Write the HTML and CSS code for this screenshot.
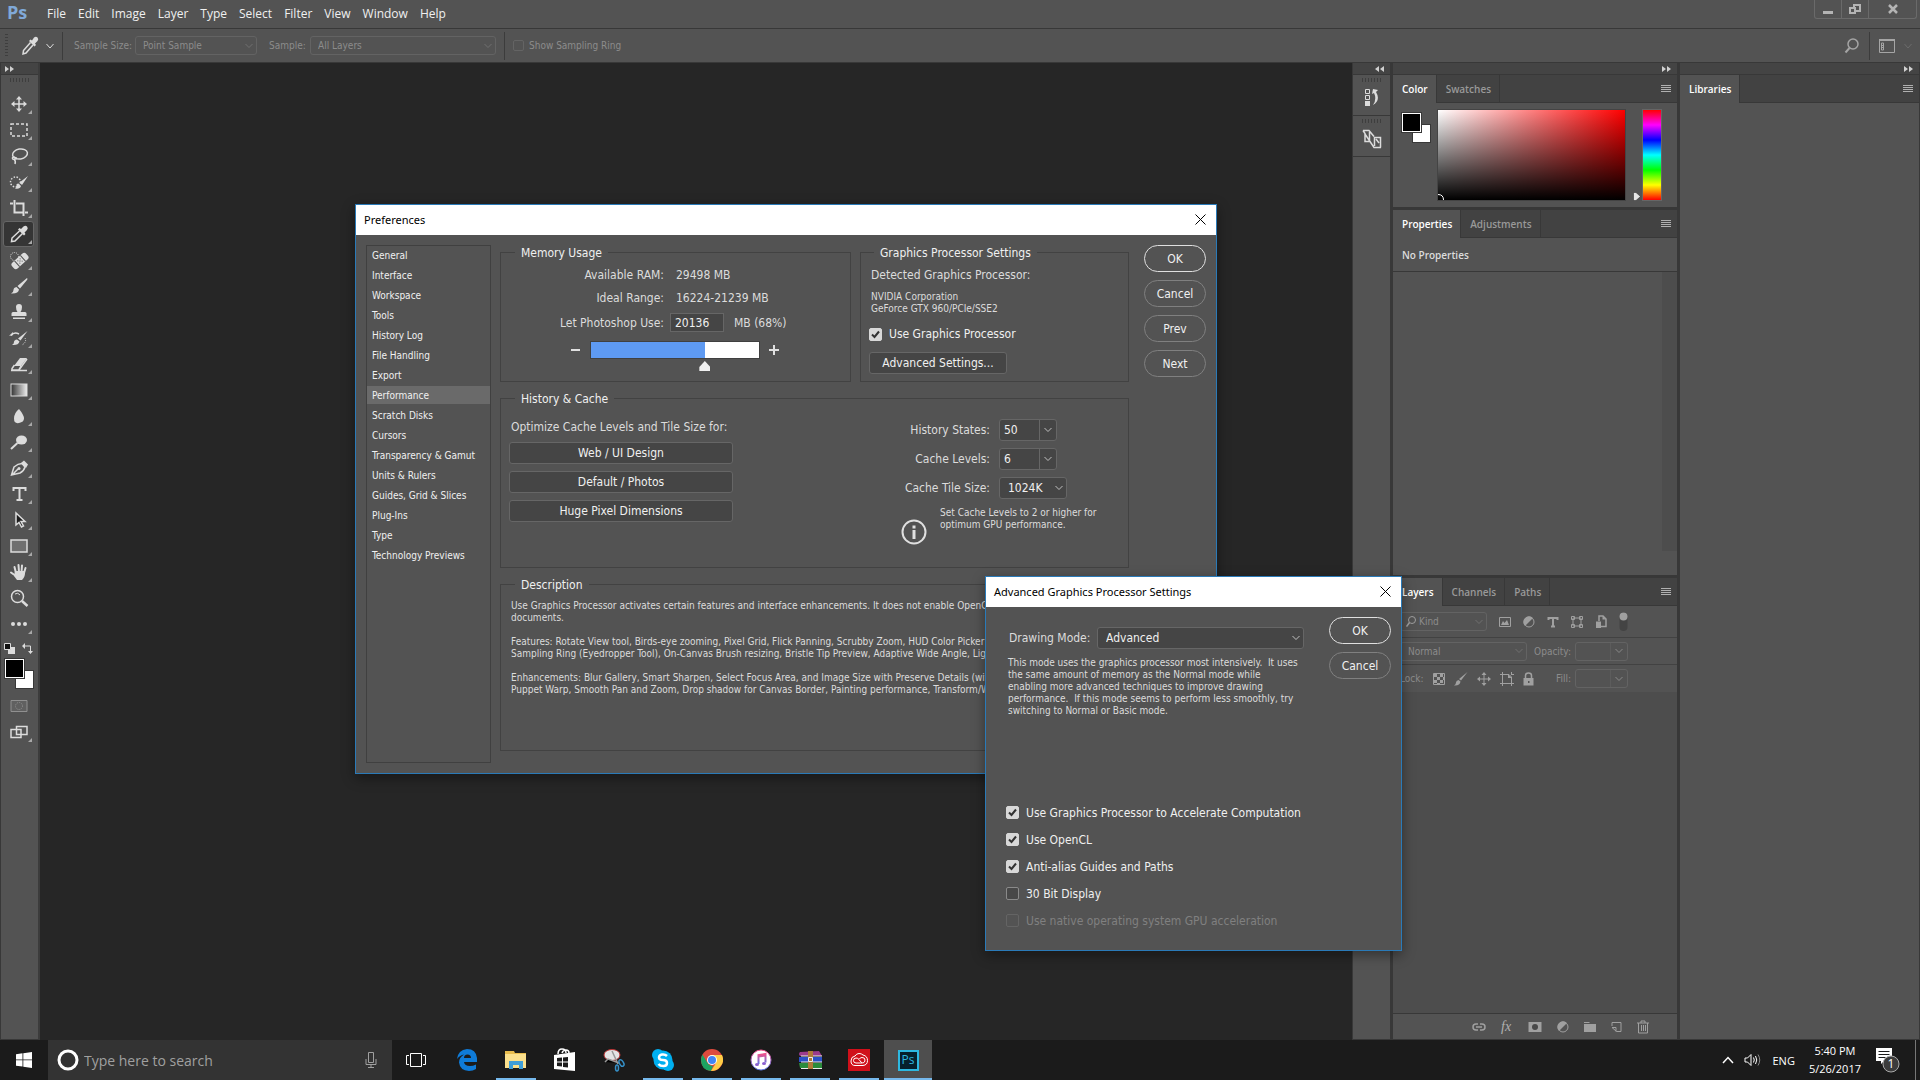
FILE: index.html
```html
<!DOCTYPE html>
<html lang="en">
<head>
    <meta charset="UTF-8">
    <meta name="viewport" content="width=device-width, initial-scale=1.0">
    <title>Photoshop - Preferences</title>
    <link rel="stylesheet" href="styles.css">
</head>
<body>
    <header class="menubar">
        <span class="logo">Ps</span>
        <nav class="menu">
            <a href="#">File</a>
            <a href="#">Edit</a>
            <a href="#">Image</a>
            <a href="#">Layer</a>
            <a href="#">Type</a>
            <a href="#">Select</a>
            <a href="#">Filter</a>
            <a href="#">View</a>
            <a href="#">Window</a>
            <a href="#">Help</a>
        </nav>
        <div class="window-buttons">
            <button aria-label="Minimize"><svg width="12" height="12" viewBox="0 0 12 12"><path fill="#b4b4b4" d="M1 8h10v3H1z"/></svg></button>
            <button aria-label="Restore"><svg width="12" height="12" viewBox="0 0 12 12"><path fill="none" stroke="#b4b4b4" stroke-width="2" d="M1 5h5v5H1zM5 4V2h6v6H7"/></svg></button>
            <button class="close" aria-label="Close"><svg width="12" height="12" viewBox="0 0 12 12"><path stroke="#b4b4b4" stroke-width="2.500" d="M2 2l8 8M10 2l-8 8"/></svg></button>
        </div>
    </header>

    <div class="options">
        <span class="grip-v"></span>
        <button class="tool-preset" aria-label="Eyedropper presets">
            <svg width="18" height="20" viewBox="0 0 18 20"><path fill="none" stroke="#dcdcdc" stroke-width="1.500" d="M9.500 6.500L2.500 14.500 2 18l3-1 7-8"/><path fill="#dcdcdc" d="M8 5l1.500-1.500 1.500 1L13 1.500q2-1.500 3.500 0t0 3.500L14 7.500l1 1.500-1.500 1.500z"/></svg>
            <svg width="8" height="6" viewBox="0 0 8 6"><path fill="none" stroke="#dcdcdc" d="M.5 1L4 5l3.500-4"/></svg>
        </button>
        <span class="divider"></span>
        <label class="dim" for="sampleSize">Sample Size:</label>
        <select class="flat sample-size" id="sampleSize" disabled><option>Point Sample</option></select>
        <label class="dim sample-label" for="sample">Sample:</label>
        <select class="flat sample" id="sample" disabled><option>All Layers</option></select>
        <span class="divider"></span>
        <label class="dim ring"><input type="checkbox" disabled>Show Sampling Ring</label>
        <div class="options-right">
            <svg width="16" height="16" viewBox="0 0 16 16"><circle cx="9" cy="6" r="5" fill="none" stroke="#a5a5a5" stroke-width="1.500"/><path stroke="#a5a5a5" stroke-width="2" d="M5.500 10L1.500 14.500"/></svg>
            <span class="divider"></span>
            <svg width="16" height="14" viewBox="0 0 16 14"><path fill="none" stroke="#a5a5a5" d="M.5.500h15v13H.5z"/><path stroke="#a5a5a5" stroke-width="2" d="M0 1h16"/><path fill="none" stroke="#a5a5a5" d="M2.500 4v7h2V4zM2.500 6.500h2M2.500 8.500h2"/></svg>
            <svg width="8" height="6" viewBox="0 0 8 6"><path fill="none" stroke="#6c6c6c" d="M.5 1L4 5l3.500-4"/></svg>
        </div>
    </div>

    <main class="workspace">
        <aside class="toolbar">
            <div class="collapse"><svg width="9" height="6" viewBox="0 0 9 6"><path fill="#d0d0d0" d="M0 0l4 3-4 3zM5 0l4 3-4 3z"/></svg></div>
            <span class="grip-h"></span>
            <div class="tools">
                <button class="tool" aria-label="Move"><svg viewBox="0 0 20 20"><path stroke="#dcdcdc" stroke-width="1.500" d="M10 4v12M4 10h12"/><path fill="#dcdcdc" d="M10 2l3 3.500H7zM10 18l3-3.500H7zM2 10l3.500-3v6zM18 10l-3.500-3v6z"/></svg></button>
                <button class="tool" aria-label="Marquee"><svg viewBox="0 0 20 20"><path fill="none" stroke="#dcdcdc" stroke-width="1.500" stroke-dasharray="3 2" d="M2 4h16v12H2z"/></svg></button>
                <button class="tool" aria-label="Lasso"><svg viewBox="0 0 20 20"><g fill="none" stroke="#dcdcdc" stroke-width="1.500"><ellipse cx="11" cy="8" rx="7.500" ry="5" transform="rotate(-10 11 8)"/><path d="M6 11q-3 0-2.500 1.500T6.500 13t-.5-1.500M5 13q2 2 1 5"/></g></svg></button>
                <button class="tool" aria-label="Quick selection"><svg viewBox="0 0 20 20"><circle cx="6.500" cy="10" r="5" fill="none" stroke="#dcdcdc" stroke-width="1.500" stroke-dasharray="1.500 1.500"/><path fill="#dcdcdc" d="M19 4l-6 9-2.500-2.500zM9.500 11.500l2.500 2.500q-1 3.500-6 2.500 2-1 1.500-3t2-2z"/></svg></button>
                <button class="tool" aria-label="Crop"><svg viewBox="0 0 20 20"><path fill="none" stroke="#dcdcdc" stroke-width="2" d="M1 5.500h3M5.500 2v12.500H14M7 5.500h7.500V18M16 14.500h3"/></svg></button>
                <button class="tool active" aria-label="Eyedropper"><svg viewBox="0 0 20 20"><path fill="none" stroke="#dcdcdc" stroke-width="1.500" d="M10.500 7L3 14l-.5 3.500L6 17l7.500-7.500"/><path fill="#dcdcdc" d="M9 5.500L10.500 4l1.500 1 2.500-2.500q2-1.500 3.500 0t0 3.500L15.500 8.500l1 1.500L15 11.500z"/></svg></button>
                <button class="tool" aria-label="Healing brush"><svg viewBox="0 0 20 20"><circle cx="5.500" cy="6.500" r="4" fill="none" stroke="#dcdcdc" stroke-dasharray="1 1"/><g transform="rotate(-42 11 11)"><rect x="1.500" y="7" width="19" height="8" rx="3" fill="#dcdcdc"/><path stroke="#535353" d="M7 7v8M15 7v8"/><path fill="#535353" d="M9 9h1v1H9zM12 9h1v1h-1zM10.500 10.500h1v1h-1zM9 12h1v1H9zM12 12h1v1h-1z"/></g></svg></button>
                <button class="tool" aria-label="Brush"><svg viewBox="0 0 20 20"><path fill="#dcdcdc" d="M18 2q1 1 0 2l-7 8.500L8.500 10zM7.500 11l2.500 2.500q-.5 4.500-8 4 2.500-1 2.500-3.500T7.500 11z"/></svg></button>
                <button class="tool" aria-label="Clone stamp"><svg viewBox="0 0 20 20"><path fill="#dcdcdc" d="M10 2q3 0 3 3t-1.500 5H16q1.500 0 1.500 1.500V14h-15v-2.500Q2.500 10 4 10h4.500Q7 8 7 5t3-3zM4 15.500h12V17H4z"/></svg></button>
                <button class="tool" aria-label="History brush"><svg viewBox="0 0 20 20"><path fill="#dcdcdc" d="M18.500 3l-7 9.500L9 10.500zM8 11.500l2.500 2q-1 4-7.500 3.500 2-1 2-3t3-2.500zM0 8l4-4v3z"/><path fill="none" stroke="#dcdcdc" stroke-width="1.500" d="M2 7.500q3-4 8-1.500"/><path fill="none" stroke="#dcdcdc" stroke-dasharray="1 1" d="M16 10q2 4-3 7"/></svg></button>
                <button class="tool" aria-label="Eraser"><svg viewBox="0 0 20 20"><path fill="#dcdcdc" d="M11 4h7l-6 8H5z"/><path fill="none" stroke="#dcdcdc" stroke-width="1.500" d="M5.500 11L3 14.500v1.500h7l8-11M10 15.500l2-3.500M2 16.500h16"/></svg></button>
                <button class="tool" aria-label="Gradient"><svg viewBox="0 0 20 20"><defs><linearGradient id="g1"><stop offset="0" stop-color="#333"/><stop offset="1" stop-color="#eee"/></linearGradient></defs><rect x="2" y="4" width="16" height="12" fill="url(#g1)" stroke="#dcdcdc"/></svg></button>
                <button class="tool" aria-label="Blur"><svg viewBox="0 0 20 20"><path fill="#dcdcdc" d="M10 3q5 6 5 9.500T10 17t-5-4.500T10 3z"/></svg></button>
                <button class="tool" aria-label="Dodge"><svg viewBox="0 0 20 20"><ellipse cx="12.500" cy="8" rx="5.500" ry="4.500" fill="#dcdcdc"/><path stroke="#dcdcdc" stroke-width="2" d="M8.500 11L2 17"/></svg></button>
                <button class="tool" aria-label="Pen"><svg viewBox="0 0 20 20"><path fill="none" stroke="#dcdcdc" stroke-width="1.500" d="M2.500 17L5 9q4-3.500 8-3.500l3 3.500q-1 4-5 6zM3 17l6-6"/><circle cx="10" cy="10.500" r="1.500" fill="#dcdcdc"/><path fill="#dcdcdc" d="M12 5l3-2.500 4 4-2 3.500z"/></svg></button>
                <button class="tool" aria-label="Type"><svg viewBox="0 0 20 20"><path fill="none" stroke="#dcdcdc" stroke-width="2" d="M4.500 7V4h12v3M10.500 4v12M7.500 16h6"/></svg></button>
                <button class="tool" aria-label="Path selection"><svg viewBox="0 0 20 20"><path fill="#1c1c1c" stroke="#dcdcdc" stroke-width="1.500" d="M7 3v12l3-2.500 2.500 4.500 2-1-2.500-4.500h4z"/></svg></button>
                <button class="tool" aria-label="Rectangle"><svg viewBox="0 0 20 20"><path fill="#707070" stroke="#dcdcdc" stroke-width="1.500" d="M2 4h16v12H2z"/></svg></button>
                <button class="tool" aria-label="Hand"><svg viewBox="0 0 20 20"><g stroke="#dcdcdc" stroke-width="2" stroke-linecap="round"><path d="M7 11L5.500 5M10 10L9.500 3M12.500 10l.5-6.500M15 11l1.500-5M7 14l-5-3.500"/></g><path fill="#dcdcdc" d="M6 9h10q.5 6-3 9H8l-3-4z"/></svg></button>
                <button class="tool plain" aria-label="Zoom"><svg viewBox="0 0 20 20"><circle cx="8.500" cy="8.500" r="6" fill="none" stroke="#dcdcdc" stroke-width="1.500"/><path stroke="#dcdcdc" stroke-width="2.500" d="M13 13l5.500 5"/><path fill="none" stroke="#dcdcdc" d="M6 6q3-2 5 1"/></svg></button>
                <button class="tool" aria-label="More tools"><svg viewBox="0 0 20 20"><g fill="#dcdcdc"><circle cx="4" cy="10" r="2"/><circle cx="10" cy="10" r="2"/><circle cx="16" cy="10" r="2"/></g></svg></button>
            </div>
            <div class="mini-row">
                <svg width="11" height="11" viewBox="0 0 11 11"><path fill="#dcdcdc" d="M4 4h7v7H4z"/><path fill="#111" stroke="#dcdcdc" d="M.5.500h6v6h-6z"/></svg>
                <svg width="11" height="11" viewBox="0 0 11 11"><path fill="none" stroke="#dcdcdc" d="M2 3h6.500v6"/><path fill="#dcdcdc" d="M0 3l3-3v6zM8.500 11l-2.500-3h5z"/></svg>
            </div>
            <div class="swatches"><span class="back"></span><span class="fore"></span></div>
            <button class="tool plain" aria-label="Quick mask"><svg viewBox="0 0 20 20"><path fill="#606060" stroke="#909090" d="M2 4.500h16v11H2z"/><circle cx="10" cy="10" r="3.500" fill="none" stroke="#909090" stroke-dasharray="1 1"/></svg></button>
            <button class="tool" aria-label="Screen mode"><svg viewBox="0 0 20 20"><path fill="#535353" stroke="#dcdcdc" stroke-width="1.500" d="M2 7.500h10v8H2zM7.500 4.500H18v8H7.500z"/></svg></button>
        </aside>

        <section class="canvas"></section>

        <aside class="dock">
            <div class="collapse right"><svg width="9" height="6" viewBox="0 0 9 6"><path fill="#d0d0d0" d="M4 0L0 3l4 3zM9 0L5 3l4 3z"/></svg></div>
            <button class="dock-item" aria-label="History"><span class="grip-h"></span><svg width="16" height="20" viewBox="0 0 16 20"><path fill="none" stroke="#dcdcdc" d="M1.500 1.500h4v4h-4zM1.500 7.500h4v4h-4z"/><path fill="#dcdcdc" d="M1 13h5v5H1zM8 6l1-5 5 1-2 2q5 8-3 13 4-6 1-12z"/></svg></button>
            <button class="dock-item" aria-label="Library"><span class="grip-h"></span><svg width="20" height="20" viewBox="0 0 20 20"><path fill="none" stroke="#dcdcdc" stroke-width="1.500" d="M1 1.500h6l5 6M1 1.500l2 3v8h4.500V3M3 5l9 13.500h7M12.500 17V8.500h6v10M14 10l3 4"/></svg></button>
        </aside>

        <aside class="panels">
            <div class="collapse right"><svg width="9" height="6" viewBox="0 0 9 6"><path fill="#d0d0d0" d="M0 0l4 3-4 3zM5 0l4 3-4 3z"/></svg></div>
            <section class="panel">
                <div class="tabs">
                    <button class="tab current">Color</button>
                    <button class="tab">Swatches</button>
                    <span class="burger"></span>
                </div>
                <div class="color-body">
                    <div class="swatches small"><span class="back"></span><span class="fore"></span></div>
                    <div class="field"><svg width="6" height="6" viewBox="0 0 6 6"><path fill="none" stroke="#fff" d="M0 .5q5.500 0 5.500 5.500"/></svg></div>
                    <svg class="hue-mark" width="8" height="9" viewBox="0 0 8 9"><path fill="#e6e6e6" stroke="#222" stroke-width=".5" d="M.5 1.500Q.5.500 1.500.5H3l4.500 4L3 8.500H1.500q-1 0-1-1z"/></svg>
                    <div class="hue"></div>
                </div>
            </section>
            <section class="panel properties">
                <div class="tabs">
                    <button class="tab current">Properties</button>
                    <button class="tab">Adjustments</button>
                    <span class="burger"></span>
                </div>
                <div class="no-properties">No Properties</div>
                <div class="scroll-area"><span class="scroll-strip"></span></div>
            </section>
            <section class="panel layers">
                <div class="tabs">
                    <button class="tab current">Layers</button>
                    <button class="tab">Channels</button>
                    <button class="tab">Paths</button>
                    <span class="burger"></span>
                </div>
                <div class="layer-row filter-row">
                    <div class="kind">
                        <svg width="10" height="11" viewBox="0 0 10 11"><circle cx="6" cy="4" r="3.500" fill="none" stroke="#a0a0a0"/><path stroke="#a0a0a0" stroke-width="1.500" d="M3.500 6.500L.5 10.500"/></svg>
                        <select class="flat" aria-label="Filter kind" disabled><option>Kind</option></select>
                    </div>
                    <svg width="12" height="12" viewBox="0 0 12 12"><path fill="none" stroke="#a0a0a0" d="M.5 1.500h11v9H.5z"/><path fill="#a0a0a0" d="M2 9l2-4 1.500 2L8 4l2 5z"/></svg>
                    <svg width="12" height="12" viewBox="0 0 12 12"><circle cx="6" cy="6" r="5" fill="none" stroke="#a0a0a0"/><path fill="#a0a0a0" d="M10 2A5.500 5.500 0 0 0 2 10z"/></svg>
                    <svg width="12" height="12" viewBox="0 0 12 12"><path fill="none" stroke="#a0a0a0" stroke-width="2" d="M1.500 4V2h9v2M6 2v8.500M4 10.500h4"/></svg>
                    <svg width="12" height="12" viewBox="0 0 12 12"><path fill="none" stroke="#a0a0a0" d="M2 2h8v8H2zM.5.500h3v3h-3zM8.500.500h3v3h-3zM.5 8.500h3v3h-3zM8.500 8.500h3v3h-3z"/></svg>
                    <svg width="12" height="13" viewBox="0 0 12 13"><path fill="none" stroke="#a0a0a0" stroke-width="1.500" d="M4 6V1h4l3 3v7.500H6"/><path fill="#a0a0a0" d="M1 6.500h5V13H1zM7.500 1v3.500H11z"/></svg>
                    <svg width="9" height="19" viewBox="0 0 9 19"><rect x=".5" width="8" height="19" rx="4" fill="#444"/><circle cx="4.500" cy="4.500" r="4" fill="#a0a0a0"/></svg>
                </div>
                <div class="layer-row">
                    <select class="flat blend" aria-label="Blend mode" disabled><option>Normal</option></select>
                    <label class="dim" for="opacity">Opacity:</label>
                    <span class="combo dim-combo"><input type="text" id="opacity" disabled><button disabled aria-label="Opacity list"></button></span>
                </div>
                <div class="layer-row lock-row">
                    <span class="dim">Lock:</span>
                    <svg width="12" height="12" viewBox="0 0 12 12"><path fill="none" stroke="#a0a0a0" d="M.5.500h11v11H.5z"/><path fill="#a0a0a0" d="M1 1h3v3H1zM7 1h3v3H7zM4 4h3v3H4zM10 4h2v3h-2zM1 7h3v3H1zM7 7h3v3H7zM4 10h3v2H4z"/></svg>
                    <svg width="14" height="14" viewBox="0 0 14 14"><path fill="#a0a0a0" d="M13.500 0L7 8.500 5 7zM4.500 8l2 1.500Q6 14 0 13.500q2-1 2-3T4.500 8z"/></svg>
                    <svg width="14" height="14" viewBox="0 0 14 14"><path stroke="#a0a0a0" d="M7 2v10M2 7h10"/><path fill="#a0a0a0" d="M7 0l2.500 3h-5zM7 14l2.500-3h-5zM0 7l3-2.500v5zM14 7l-3-2.500v5z"/></svg>
                    <svg width="14" height="14" viewBox="0 0 14 14"><path fill="none" stroke="#a0a0a0" d="M0 2.500h9M2.500 0v14M0 11.500h14M11.500 5v9M9 2.500l2.500 2.500"/><path fill="#a0a0a0" d="M8 2v4h4zM11 0h1v2h2v1h-3z"/></svg>
                    <svg width="11" height="14" viewBox="0 0 11 14"><path fill="#a0a0a0" d="M.5 6h10v7.500H.5z"/><path fill="none" stroke="#a0a0a0" stroke-width="1.500" d="M2.500 6V3.500q0-2.500 3-2.500t3 2.500V6"/><path fill="#535353" d="M5 9h1.500v2H5z"/></svg>
                    <label class="dim fill-label" for="fill">Fill:</label>
                    <span class="combo dim-combo"><input type="text" id="fill" disabled><button disabled aria-label="Fill list"></button></span>
                </div>
                <div class="layer-list"></div>
                <div class="layer-actions">
                    <svg width="14" height="12" viewBox="0 0 14 12"><path fill="none" stroke="#a0a0a0" stroke-width="1.500" d="M6 3H4Q1 3 1 6t3 3h2M8 3h2q3 0 3 3t-3 3H8M4 6h6"/></svg>
                    <span class="fx">fx</span>
                    <svg width="14" height="12" viewBox="0 0 14 12"><path fill="#a0a0a0" d="M.5 1h13v10H.5z"/><circle cx="7" cy="6" r="3" fill="#484848"/></svg>
                    <svg width="12" height="12" viewBox="0 0 12 12"><circle cx="6" cy="6" r="5" fill="none" stroke="#a0a0a0"/><path fill="#a0a0a0" d="M10 2A5.500 5.500 0 0 0 2 10z"/></svg>
                    <svg width="12" height="12" viewBox="0 0 12 12"><path fill="#a0a0a0" d="M0 1h5l1 1H0zM0 3h12v8H0z"/></svg>
                    <svg width="11" height="12" viewBox="0 0 11 12"><path fill="none" stroke="#a0a0a0" d="M1 5V1.500h9v9H5.500L1 6.500h4v4"/></svg>
                    <svg width="12" height="14" viewBox="0 0 12 14"><path fill="none" stroke="#a0a0a0" d="M0 3h12M4 3V1h4v2M1.500 3v10h9V3M4.500 5v6M6.500 5v6M8.500 5v6"/></svg>
                </div>
            </section>
        </aside>

        <aside class="libraries">
            <div class="collapse right"><svg width="9" height="6" viewBox="0 0 9 6"><path fill="#d0d0d0" d="M0 0l4 3-4 3zM5 0l4 3-4 3z"/></svg></div>
            <section class="panel">
                <div class="tabs">
                    <button class="tab current">Libraries</button>
                    <span class="burger"></span>
                </div>
            </section>
        </aside>
    </main>

    <footer class="taskbar">
        <button class="start" aria-label="Start"><svg width="16" height="16" viewBox="0 0 16 16"><path fill="#fff" d="M0 2.200L6.500 1.300v6.200H0zM7.300 1.200L16 0v7.500H7.300zM0 8.300h6.500v6.200L0 13.700zM7.300 8.300H16V16l-8.700-1.200z"/></svg></button>
        <div class="search">
            <svg width="22" height="22" viewBox="0 0 22 22"><circle cx="11" cy="11" r="9" fill="none" stroke="#fff" stroke-width="3"/></svg>
            <input type="text" placeholder="Type here to search" aria-label="Search">
            <svg width="12" height="16" viewBox="0 0 12 16"><path fill="none" stroke="#a0a0a0" d="M3.500.500h5v10h-5zM1 7v5.500h10V7M6 13v2.500M3 15.500h6"/></svg>
        </div>
        <button class="app first" aria-label="Task view"><svg width="20" height="14" viewBox="0 0 20 14"><path fill="none" stroke="#fff" d="M4.500.500h11v13h-11zM3 2.500H.5v9H3M17 2.500h2.500v9H17"/></svg></button>
        <button class="app" aria-label="Edge"><svg width="22" height="22" viewBox="0 0 22 22"><path fill="#0f7bd8" d="M1 10Q2 1 11 0q9 0 10 9v4H8q.5 4 6 4 3 0 6-1.500v4.500q-3 2-7 2-9-.5-10-8.500 0-5 5-8-4 .5-7 4.500zM8 9h7q0-3.500-3.500-3.500T8 9z"/></svg></button>
        <button class="app open" aria-label="File Explorer"><svg width="22" height="20" viewBox="0 0 22 20"><path fill="#e9bd4e" d="M0 1h9l1 2h11v4H0z"/><path fill="#fbe08d" d="M0 4h21v14H0z"/><path fill="#3f9ed8" d="M4 11h14v8h-4v-4H8v4H4z"/></svg></button>
        <button class="app" aria-label="Store"><svg width="22" height="24" viewBox="0 0 22 24"><path fill="#fff" d="M0 7l21-3v19L0 21z"/><path fill="none" stroke="#fff" stroke-width="1.500" d="M4 6q0-5 4-5t4 4M8 5q1-3 4-3t3 3"/><path fill="#1b1b1b" d="M3 10l5-.5v4H3zM9 9.500l5-.5v4.500H9zM3 14.500h5v4l-5-.5zM9 14.500h5v5l-5-.5z"/></svg></button>
        <button class="app" aria-label="Snipping Tool"><svg width="22" height="24" viewBox="0 0 22 24"><ellipse cx="9" cy="7" rx="8" ry="5.500" fill="#e4e4e4" stroke="#b33"/><path stroke="#999" stroke-width="1.500" d="M9 3l6 13M2 14l3-3 11 4"/><g fill="none" stroke="#3590c8" stroke-width="1.500"><ellipse cx="18.500" cy="15" rx="2" ry="3.500" transform="rotate(-30 18.500 15)"/><ellipse cx="14" cy="20" rx="1.500" ry="3"/></g></svg></button>
        <button class="app open" aria-label="Skype"><svg width="22" height="22" viewBox="0 0 22 22"><circle cx="11" cy="11" r="9.500" fill="#00aff0"/><circle cx="6" cy="6" r="6" fill="#00aff0"/><circle cx="16" cy="16" r="6" fill="#00aff0"/><path fill="none" stroke="#fff" stroke-width="2.500" d="M15 7q-2-2-5-1.500T7 8.500t4 2.500 4 3-3.500 3T6.500 15"/></svg></button>
        <button class="app open" aria-label="Chrome"><svg width="22" height="22" viewBox="0 0 22 22"><circle cx="11" cy="11" r="11" fill="#dd4b3e"/><path fill="#1da462" d="M1.500 5.500L6 13q2 4 6 4l-2 5Q0 21 0 11q0-3 1.500-5.500z"/><path fill="#ffcd46" d="M11 6h10q3 7-2 12-3 4-9 4l5-8z"/><circle cx="11" cy="11" r="5" fill="#fff"/><circle cx="11" cy="11" r="4" fill="#4285f4"/></svg></button>
        <button class="app open" aria-label="iTunes"><svg width="22" height="22" viewBox="0 0 22 22"><defs><linearGradient id="g2" x1="0" y1="0" x2="0" y2="1"><stop offset="0" stop-color="#f0508c"/><stop offset="1" stop-color="#5a78e6"/></linearGradient></defs><circle cx="11" cy="11" r="10" fill="#fff" stroke="url(#g2)"/><path fill="none" stroke="url(#g2)" stroke-width="2" d="M8.500 15V6l7-1v8.500M8.500 7.500l7-1"/><ellipse cx="7" cy="15.500" rx="2" ry="1.500" fill="#8a5fd0"/><ellipse cx="14" cy="14.500" rx="2" ry="1.500" fill="#8a5fd0"/></svg></button>
        <button class="app open" aria-label="WinRAR"><svg width="24" height="20" viewBox="0 0 24 20"><path fill="#9b3b8c" d="M2 2l19-1 3 5H2q-2-2 0-4z"/><path fill="#2b50c8" d="M1 7h23v5H1z"/><path fill="#2c8c3c" d="M1 13h23v5H2z"/><path stroke="#eee" d="M3 6h21M3 12h21M3 18.500h21"/><path fill="#b07a3a" d="M10 1h5v18h-5z"/><path fill="none" stroke="#eee" d="M10.500 7.500h4v4h-4z"/></svg></button>
        <button class="app open" aria-label="Creative Cloud"><svg width="22" height="22" viewBox="0 0 22 22"><path fill="#d0101a" d="M0 0h22v22H0z"/><g fill="none" stroke="#fff"><path d="M7 16.500h8q4.500-.5 4.500-5T15 6q-1.500-1.500-4-1.500T7 7q-4 .5-4 5t4 4.500z"/><path d="M14 14H8q-2.500 0-2.500-2.500T8 9q2 0 3 1.500l2 2.500q1 1 2 1 2-.5 2-3t-3-2.500q-2 0-2.500 1.500"/></g></svg></button>
        <button class="app open focused" aria-label="Photoshop"><span class="ps-icon">Ps</span></button>
        <div class="tray">
            <svg width="12" height="8" viewBox="0 0 12 8"><path fill="none" stroke="#fff" stroke-width="1.500" d="M1 7l5-5.500L11 7"/></svg>
            <svg width="18" height="14" viewBox="0 0 18 14"><path fill="none" stroke="#fff" d="M1 5h2.500L7 1.500v11L3.500 9H1zM9.500 4.500q1.500 2.500 0 5M11.500 3q2.500 4 0 8"/><path fill="none" stroke="#888" d="M14 1.500q3.500 5.500 0 11"/></svg>
            <span>ENG</span>
            <span class="clock">5:40 PM<br>5/26/2017</span>
            <svg width="26" height="26" viewBox="0 0 26 26"><path fill="#fff" d="M1 1h16v13H9l-3 3v-3H1z"/><path stroke="#1b1b1b" d="M3.500 4.500h11M3.500 7.500h11M3.500 10.500h7"/><circle cx="16" cy="17" r="8" fill="#3c3c3c" stroke="#aaa"/><text x="16" y="21" text-anchor="middle" class="badge">1</text></svg>
        </div>
    </footer>

    <section class="dialog preferences">
        <div class="title"><h1>Preferences</h1><button aria-label="Close"><svg width="11" height="11" viewBox="0 0 11 11"><path stroke="#000" d="M.5.500l10 10M10.500.500l-10 10"/></svg></button></div>
        <div class="dialog-body">
            <ul class="sections">
                <li><a href="#">General</a></li>
                <li><a href="#">Interface</a></li>
                <li><a href="#">Workspace</a></li>
                <li><a href="#">Tools</a></li>
                <li><a href="#">History Log</a></li>
                <li><a href="#">File Handling</a></li>
                <li><a href="#">Export</a></li>
                <li class="selected"><a href="#">Performance</a></li>
                <li><a href="#">Scratch Disks</a></li>
                <li><a href="#">Cursors</a></li>
                <li><a href="#">Transparency &amp; Gamut</a></li>
                <li><a href="#">Units &amp; Rulers</a></li>
                <li><a href="#">Guides, Grid &amp; Slices</a></li>
                <li><a href="#">Plug-Ins</a></li>
                <li><a href="#">Type</a></li>
                <li><a href="#">Technology Previews</a></li>
            </ul>
            <div class="settings">
                <div class="settings-top">
                    <fieldset class="memory">
                        <legend>Memory Usage</legend>
                        <div class="memory-grid">
                            <span>Available RAM:</span><span class="value">29498 MB</span>
                            <span>Ideal Range:</span><span class="value">16224-21239 MB</span>
                            <label for="memory">Let Photoshop Use:</label>
                            <span class="memory-use"><input type="text" id="memory" value="20136">MB (68%)</span>
                        </div>
                        <div class="memory-slider">
                            <button aria-label="Less"><svg width="10" height="10" viewBox="0 0 10 10"><path stroke="#e0e0e0" stroke-width="2" d="M0 5h9"/></svg></button>
                            <input type="range" min="0" max="100" value="69" aria-label="Memory">
                            <button aria-label="More"><svg width="10" height="10" viewBox="0 0 10 10"><path stroke="#e0e0e0" stroke-width="2" d="M0 5h10M5 0v10"/></svg></button>
                        </div>
                    </fieldset>
                    <fieldset class="gpu">
                        <legend>Graphics Processor Settings</legend>
                        <div>Detected Graphics Processor:</div>
                        <p>NVIDIA Corporation<br>GeForce GTX 960/PCIe/SSE2</p>
                        <label class="check"><input type="checkbox" checked>Use Graphics Processor</label>
                        <button class="box-button">Advanced Settings...</button>
                    </fieldset>
                </div>
                <fieldset class="history">
                    <legend>History &amp; Cache</legend>
                    <div class="optimize">
                        <span>Optimize Cache Levels and Tile Size for:</span>
                        <button class="box-button">Web / UI Design</button>
                        <button class="box-button">Default / Photos</button>
                        <button class="box-button">Huge Pixel Dimensions</button>
                    </div>
                    <div class="cache">
                        <label for="states">History States:</label>
                        <span class="combo"><input type="text" id="states" value="50"><button aria-label="History states list"></button></span>
                        <label for="levels">Cache Levels:</label>
                        <span class="combo"><input type="text" id="levels" value="6"><button aria-label="Cache levels list"></button></span>
                        <label for="tile">Cache Tile Size:</label>
                        <select class="tile-size" id="tile"><option>1024K</option></select>
                        <div class="hint">
                            <svg width="26" height="26" viewBox="0 0 26 26"><circle cx="13" cy="13" r="11.500" fill="none" stroke="#e0e0e0" stroke-width="2"/><path fill="#e0e0e0" d="M11.500 6.500h3v3h-3zM11.500 11h3v9h-3z"/></svg>
                            <p>Set Cache Levels to 2 or higher for<br>optimum GPU performance.</p>
                        </div>
                    </div>
                </fieldset>
                <fieldset class="description">
                    <legend>Description</legend>
                    <p>Use Graphics Processor activates certain features and interface enhancements. It does not enable OpenGL<br>documents.</p>
                    <p>Features: Rotate View tool, Birds-eye zooming, Pixel Grid, Flick Panning, Scrubby Zoom, HUD Color Picker and<br>Sampling Ring (Eyedropper Tool), On-Canvas Brush resizing, Bristle Tip Preview, Adaptive Wide Angle, Lighting</p>
                    <p>Enhancements: Blur Gallery, Smart Sharpen, Select Focus Area, and Image Size with Preserve Details (with<br>Puppet Warp, Smooth Pan and Zoom, Drop shadow for Canvas Border, Painting performance, Transform/Warp</p>
                </fieldset>
            </div>
            <div class="dialog-buttons">
                <button class="primary">OK</button>
                <button>Cancel</button>
                <button>Prev</button>
                <button>Next</button>
            </div>
        </div>
    </section>

    <section class="dialog advanced">
        <div class="title"><h1>Advanced Graphics Processor Settings</h1><button aria-label="Close"><svg width="11" height="11" viewBox="0 0 11 11"><path stroke="#000" d="M.5.500l10 10M10.500.500l-10 10"/></svg></button></div>
        <div class="dialog-body">
            <div class="advanced-main">
                <div class="mode">
                    <label for="mode">Drawing Mode:</label>
                    <select id="mode"><option>Advanced</option></select>
                </div>
                <p>This mode uses the graphics processor most intensively.&nbsp; It uses<br>the same amount of memory as the Normal mode while<br>enabling more advanced techniques to improve drawing<br>performance.&nbsp; If this mode seems to perform less smoothly, try<br>switching to Normal or Basic mode.</p>
                <div class="checks">
                    <label class="check"><input type="checkbox" checked>Use Graphics Processor to Accelerate Computation</label>
                    <label class="check"><input type="checkbox" checked>Use OpenCL</label>
                    <label class="check"><input type="checkbox" checked>Anti-alias Guides and Paths</label>
                    <label class="check"><input type="checkbox">30 Bit Display</label>
                    <label class="check off"><input type="checkbox" disabled>Use native operating system GPU acceleration</label>
                </div>
            </div>
            <div class="dialog-buttons">
                <button class="primary">OK</button>
                <button>Cancel</button>
            </div>
        </div>
    </section>
</body>
</html>
```
FILE: styles.css
```css
* {
    box-sizing: border-box;
}

body {
    margin: 0;
    height: 100vh;
    display: flex;
    flex-direction: column;
    overflow: hidden;
    position: relative;
    background-color: #262626;
    color: #dcdcdc;
    font-family: "DejaVu Sans Condensed", "DejaVu Sans", sans-serif;
    font-size: 12px;
}

button, input, select {
    font: inherit;
    color: inherit;
    margin: 0;
}

button {
    padding: 0;
    border: none;
    background: none;
}

a {
    color: inherit;
    text-decoration: none;
}

p {
    margin: 0;
    font-size: 10px;
    line-height: 12px;
    white-space: nowrap;
}

svg {
    display: block;
    flex: none;
}

select {
    appearance: none;
    height: 22px;
    padding: 0 8px;
    border: 1px solid #666;
    border-radius: 3px;
    opacity: 1;
    background: #454545 url("data:image/svg+xml,%3Csvg xmlns='http://www.w3.org/2000/svg' width='8' height='6'%3E%3Cpath d='M.5 1L4 4.500 7.500 1' fill='none' stroke='%23c0c0c0'/%3E%3C/svg%3E") no-repeat right 3px center;
}

select.flat {
    height: 19px;
    padding: 0 7px;
    border-color: #636363;
    background-color: transparent;
    background-image: url("data:image/svg+xml,%3Csvg xmlns='http://www.w3.org/2000/svg' width='8' height='6'%3E%3Cpath d='M.5 1L4 4.500 7.500 1' fill='none' stroke='%23707070'/%3E%3C/svg%3E");
    color: #8c8c8c;
    font-size: 10px;
}

input[type="checkbox"] {
    appearance: none;
    flex: none;
    width: 13px;
    height: 13px;
    border: 1px solid #8a8a8a;
    border-radius: 2px;
    background-color: #484848;
}

input[type="checkbox"]:checked {
    border-color: #d8d8d8;
    background: #d8d8d8 url("data:image/svg+xml,%3Csvg xmlns='http://www.w3.org/2000/svg' width='9' height='9'%3E%3Cpath d='M1 4.500L3.500 7 8 1.500' fill='none' stroke='%23333' stroke-width='2'/%3E%3C/svg%3E") no-repeat center;
}

input[type="checkbox"]:disabled {
    border-color: #646464;
    background-color: transparent;
}

.dim {
    color: #8c8c8c;
    font-size: 10px;
}

.divider {
    width: 1px;
    height: 28px;
    background-color: #3c3c3c;
}

.grip-v {
    width: 3px;
    height: 24px;
    background: repeating-linear-gradient(#3e3e3e 0 1px, transparent 1px 3px);
}

.grip-h {
    display: block;
    width: 20px;
    height: 4px;
    margin: 3px auto 0;
    background: repeating-linear-gradient(90deg, #3e3e3e 0 1px, transparent 1px 3px);
}

/* top bars */

.menubar {
    display: flex;
    height: 29px;
    flex: none;
    align-items: center;
    background-color: #535353;
    border-bottom: 1px solid #383838;
}

.logo {
    width: 47px;
    padding-left: 7px;
    padding-bottom: 4px;
    color: #80a9d8;
    font: bold 18px "Open Sans", sans-serif;
}

.menu {
    display: flex;
    gap: 12px;
    padding-bottom: 2px;
    color: #f0f0f0;
    font: 12px "Open Sans", sans-serif;
}

.window-buttons {
    display: flex;
    align-self: flex-start;
    height: 19px;
    margin-left: auto;
    margin-right: 3px;
    border: 1px solid #6a6a6a;
    border-top: none;
    border-radius: 0 0 3px 3px;
}

.window-buttons button {
    display: flex;
    width: 27px;
    align-items: center;
    justify-content: center;
    border-right: 1px solid #6a6a6a;
}

.window-buttons .close {
    width: 47px;
    border-right: none;
}

.options {
    display: flex;
    height: 34px;
    flex: none;
    align-items: center;
    padding-left: 5px;
    background-color: #535353;
    border-bottom: 1px solid #383838;
}

.tool-preset {
    display: flex;
    align-items: center;
    gap: 7px;
    margin: 0 8px 0 13px;
}

.options label[for="sampleSize"] {
    width: 61px;
    margin-left: 11px;
    white-space: nowrap;
}

.sample-size {
    width: 122px;
}

.sample-label {
    width: 41px;
    margin-left: 12px;
}

.sample {
    width: 186px;
    margin-right: 8px;
}

.ring {
    display: flex;
    align-items: center;
    gap: 5px;
    margin-left: 8px;
}

.ring input {
    width: 11px;
    height: 11px;
}

.options-right {
    display: flex;
    align-items: center;
    gap: 9px;
    margin-left: auto;
    padding-right: 8px;
}

/* workspace */

.workspace {
    flex: 1;
    min-height: 0;
    display: grid;
    grid-template-columns: 40px 1fr 38px 288px 242px;
    background-color: #383838;
}

.workspace aside {
    display: flex;
    flex-direction: column;
    min-height: 0;
    min-width: 0;
    border-left: 1px solid #383838;
    border-bottom: 1px solid #383838;
}

.canvas {
    background-color: #262626;
}

.collapse {
    display: flex;
    height: 12px;
    flex: none;
    align-items: center;
    padding-left: 4px;
    background-color: #444;
    border-bottom: 1px solid #383838;
}

.collapse.right {
    justify-content: flex-end;
    padding-right: 6px;
}

.toolbar {
    background-color: #535353;
    border-right: 2px solid #3c3c3c;
}

.tools {
    display: flex;
    flex-direction: column;
    margin-top: 9px;
}

.tool {
    position: relative;
    width: 31px;
    height: 26px;
    margin-left: 2px;
    padding-left: 5px;
    border: 1px solid transparent;
    border-radius: 3px;
}

.tool svg {
    width: 20px;
    height: 20px;
}

.tool::after {
    content: "";
    position: absolute;
    right: 1px;
    bottom: 2px;
    border-left: 4px solid transparent;
    border-bottom: 4px solid #a8a8a8;
}

.tool.plain::after {
    display: none;
}

.tool.active {
    background-color: #353535;
    border-color: #666;
}

.mini-row {
    display: flex;
    gap: 7px;
    padding: 6px 0 0 3px;
}

.swatches {
    position: relative;
    width: 29px;
    height: 30px;
    margin: 5px 0 4px 4px;
}

.swatches span {
    position: absolute;
    width: 19px;
    height: 19px;
    border: 1px solid #383838;
}

.swatches .fore {
    top: 0;
    left: 0;
    background-color: #000;
    border: 1px solid #fff;
    outline: 1px solid #383838;
}

.swatches .back {
    right: 0;
    bottom: 0;
    background-color: #fff;
}

.dock {
    background-color: #535353;
}

.dock-item {
    display: flex;
    height: 41px;
    flex-direction: column;
    border-bottom: 1px solid #383838;
}

.dock-item svg {
    margin: 6px auto 0;
}

.panels {
    padding-right: 1px;
}

.libraries {
    padding-right: 1px;
}

.workspace .panels {
    border-left-width: 3px;
}

.workspace .libraries {
    border-left-width: 2px;
}

.panel {
    margin-bottom: 2px;
    border-bottom: 1px solid #383838;
    background-color: #535353;
}

.tabs {
    display: flex;
    height: 28px;
    flex: none;
    background-color: #424242;
    border-bottom: 1px solid #383838;
    font: 600 10px "Open Sans", sans-serif;
}

.tab {
    padding: 0 8px 1px 9px;
    height: 28px;
    border-right: 1px solid #383838;
    color: #999;
}

.tab.current {
    background-color: #535353;
    color: #fff;
}

.burger {
    width: 10px;
    height: 8px;
    margin: 10px 6px 0 auto;
    background: repeating-linear-gradient(#b0b0b0 0 1px, transparent 1px 2px);
}

.color-body {
    display: flex;
    height: 104px;
    padding: 6px 15px 6px 9px;
}

.swatches.small {
    margin: 4px 6px 0 0;
}

.field {
    display: flex;
    flex: 1;
    align-items: flex-end;
    border: 1px solid #444;
    background: linear-gradient(to top, #000, transparent), linear-gradient(to right, #fff, #f00);
}

.hue-mark {
    align-self: flex-end;
    margin: 0 1px 0 7px;
}

.hue {
    width: 20px;
    border: 1px solid #666;
    background: linear-gradient(#f00, #f0f, #00f, #0ff, #0f0, #ff0, #f00);
}

.properties {
    display: flex;
    flex-direction: column;
    height: 366px;
    flex: none;
}

.no-properties {
    height: 34px;
    padding-left: 9px;
    border-bottom: 1px solid #383838;
    font: 600 10px/34px "Open Sans", sans-serif;
}

.scroll-area {
    flex: 1;
    display: flex;
    justify-content: flex-end;
    margin-bottom: 24px;
}

.scroll-strip {
    width: 15px;
    background-color: #4d4d4d;
}

.layers {
    display: flex;
    flex: 1;
    flex-direction: column;
    margin-bottom: 0;
    border-bottom: none;
}

.libraries .panel {
    flex: 1;
    margin-bottom: 0;
    border-bottom: none;
}

.layer-row {
    display: flex;
    align-items: center;
    height: 27px;
    flex: none;
    padding: 0 49px 0 7px;
    border-bottom: 1px solid #424242;
}

.filter-row {
    height: 32px;
    gap: 12px;
}

.kind {
    display: flex;
    flex: 1;
    align-items: center;
    padding-left: 5px;
    border: 1px solid #636363;
    border-radius: 3px;
}

.kind select.flat {
    width: 100%;
    height: 17px;
    padding: 0 3px;
    border: none;
}

.blend {
    flex: 1;
    margin-right: 7px;
}

.combo {
    display: flex;
    width: 58px;
    height: 22px;
    border: 1px solid #666;
    border-radius: 3px;
    background-color: #454545;
}

.combo input {
    flex: 1;
    min-width: 0;
    padding: 0 4px;
    border: none;
    background: none;
}

.combo button {
    width: 17px;
    border-left: 1px solid #666;
    background: url("data:image/svg+xml,%3Csvg xmlns='http://www.w3.org/2000/svg' width='8' height='6'%3E%3Cpath d='M.5 1L4 4.500 7.500 1' fill='none' stroke='%23c0c0c0'/%3E%3C/svg%3E") no-repeat center;
}

.dim-combo {
    width: 53px;
    height: 19px;
    margin-left: 4px;
    border-color: #636363;
    background: none;
}

.dim-combo button {
    opacity: 0.5;
}

.lock-row {
    gap: 9px;
    border-bottom: none;
}

.lock-row .fill-label {
    margin-left: auto;
}

.lock-row .dim-combo {
    margin-left: -5px;
}

.layer-list {
    flex: 1;
    background-color: #4d4d4d;
    border-bottom: 1px solid #383838;
}

.layer-actions {
    display: flex;
    height: 25px;
    flex: none;
    align-items: center;
    justify-content: flex-end;
    gap: 15px;
    padding-right: 28px;
}

.fx {
    width: 12px;
    color: #b0b0b0;
    font: italic 14px "Liberation Serif", serif;
}

/* taskbar */

.taskbar {
    display: flex;
    height: 40px;
    flex: none;
    background-color: #1b1b1b;
    color: #fff;
    font: 12px "Open Sans", sans-serif;
}

.start {
    display: flex;
    width: 48px;
    align-items: center;
    justify-content: center;
}

.search {
    display: flex;
    width: 344px;
    align-items: center;
    gap: 5px;
    padding: 0 15px 0 9px;
    background-color: #333;
}

.search input {
    flex: 1;
    padding: 0;
    border: none;
    background: none;
    font-size: 14px;
}

.search input::placeholder {
    color: #a0a0a0;
}

.app {
    display: flex;
    width: 40px;
    margin-left: 9px;
    align-items: center;
    justify-content: center;
    border-bottom: 2px solid transparent;
    border-top: 2px solid transparent;
}

.app.first {
    margin-left: 4px;
    margin-right: 2px;
}

.app.open {
    border-bottom-color: #76b9ed;
}

.app.focused {
    width: 48px;
    margin-left: 5px;
    background-color: #4e4e4e;
    border-top-color: #4e4e4e;
}

.ps-icon {
    width: 21px;
    height: 21px;
    border: 2px solid #2db8e0;
    background-color: #06202c;
    color: #2db8e0;
    font-size: 12px;
    line-height: 15px;
}

.tray {
    display: flex;
    align-items: center;
    gap: 10px;
    margin-left: auto;
    margin-right: 4px;
    padding-right: 14px;
    border-right: 1px solid #777;
    font-size: 11px;
}

.clock {
    padding: 0 4px;
    line-height: 18px;
    text-align: center;
}

.badge {
    fill: #fff;
    font-size: 12px;
}

/* dialogs */

.dialog {
    position: absolute;
    display: flex;
    flex-direction: column;
    border: 1px solid #2a7ab8;
    background-color: #535353;
    box-shadow: 0 4px 12px rgba(0, 0, 0, 0.4);
}

.preferences {
    left: 355px;
    top: 204px;
    width: 862px;
}

.advanced {
    left: 985px;
    top: 576px;
    width: 417px;
}

.title {
    display: flex;
    height: 30px;
    align-items: center;
    justify-content: space-between;
    padding: 0 10px 2px 8px;
    background-color: #fff;
    color: #000;
}

.title h1 {
    margin: 0;
    font: 11px "Noto Sans", sans-serif;
}

.dialog-body {
    display: flex;
    padding: 10px;
}

.sections {
    width: 125px;
    min-height: 518px;
    margin: 0 9px 0 0;
    padding: 0;
    list-style: none;
    border: 1px solid #404040;
    color: #f0f0f0;
    font-size: 10px;
}

.sections li {
    height: 18px;
    margin-bottom: 2px;
    padding-left: 5px;
    line-height: 19px;
}

.sections .selected {
    background-color: #6a6a6a;
}

.settings {
    display: flex;
    flex: 1;
    min-width: 0;
    flex-direction: column;
    gap: 9px;
}

.settings-top {
    display: flex;
    gap: 9px;
}

fieldset {
    min-width: 0;
    margin: 0;
    padding: 0 8px;
    border: 1px solid #424242;
}

legend {
    height: 14px;
    margin-left: 6px;
    padding: 0 6px;
    color: #f0f0f0;
    line-height: 17px;
}

.memory {
    flex: 1;
    min-height: 137px;
}

.memory-grid {
    display: grid;
    grid-template-columns: 155px auto;
    grid-template-rows: 23px 23px 27px;
    column-gap: 6px;
    align-items: center;
    padding-top: 4px;
}

.memory-grid > :nth-child(odd) {
    text-align: right;
}

.value {
    padding-left: 6px;
}

.memory-use {
    display: flex;
    align-items: center;
    gap: 10px;
}

.memory-use input {
    width: 54px;
    height: 19px;
    padding: 0 4px;
    border: 1px solid #666;
    background-color: #454545;
    color: #f0f0f0;
}

.memory-slider {
    display: flex;
    align-items: center;
    gap: 9px;
    padding: 5px 0 0 62px;
}

.memory-slider input {
    appearance: none;
    width: 170px;
    height: 18px;
    border: 1px solid #404040;
    background: linear-gradient(90deg, #5e9af2 68%, #fff 68%);
}

.memory-slider input::-webkit-slider-thumb {
    appearance: none;
    width: 11px;
    height: 10px;
    margin-top: 32px;
    background-color: #f0f0f0;
    clip-path: polygon(50% 0, 100% 60%, 100% 100%, 0 100%, 0 60%);
}

.gpu {
    width: 269px;
}

.gpu legend {
    margin-left: 5px;
}

.gpu div {
    padding: 9px 0 0 2px;
}

.gpu p {
    padding: 9px 0 12px 2px;
}

.check {
    display: flex;
    align-items: center;
    gap: 7px;
    color: #f0f0f0;
}

.gpu .check {
    margin-bottom: 11px;
}

.box-button {
    height: 22px;
    border: 1px solid #666;
    border-radius: 3px;
    background-color: #454545;
    color: #f0f0f0;
}

.gpu .box-button {
    width: 138px;
}

.history {
    min-height: 177px;
}

.optimize {
    float: left;
    display: flex;
    width: 224px;
    flex-direction: column;
    gap: 7px;
    padding-top: 14px;
}

.optimize span {
    padding-left: 2px;
    line-height: 16px;
    white-space: nowrap;
}

.cache {
    float: right;
    display: grid;
    width: 219px;
    grid-template-columns: 89px auto;
    gap: 7px 9px;
    align-items: center;
    padding-top: 14px;
}

.cache label {
    text-align: right;
    white-space: nowrap;
}

.cache .combo, .tile-size {
    color: #f0f0f0;
}

.tile-size {
    width: 68px;
}

.hint {
    grid-column: 1 / 3;
    display: flex;
    gap: 13px;
}

.hint svg {
    margin-top: 13px;
}

.hint p {
    padding-top: 1px;
}

.description {
    min-height: 174px;
}

.description p {
    padding: 9px 0 3px 2px;
}

.dialog-buttons {
    display: flex;
    flex-direction: column;
    gap: 8px;
    margin-left: 15px;
}

.dialog-buttons button {
    width: 62px;
    height: 27px;
    border: 1px solid #808080;
    border-radius: 14px;
    color: #f0f0f0;
}

.dialog-buttons .primary {
    border-color: #e0e0e0;
}

.advanced-main {
    flex: 1;
    padding: 10px 0 13px 10px;
}

.mode {
    display: flex;
    align-items: center;
    justify-content: space-between;
    margin-right: 10px;
    padding-left: 3px;
}

.mode select {
    width: 207px;
    color: #f0f0f0;
}

.advanced p {
    padding: 8px 0 0 2px;
}

.checks {
    display: flex;
    flex-direction: column;
    gap: 14px;
    margin-top: 89px;
}

.checks .check {
    height: 13px;
}

.off {
    color: #808080;
}
```
